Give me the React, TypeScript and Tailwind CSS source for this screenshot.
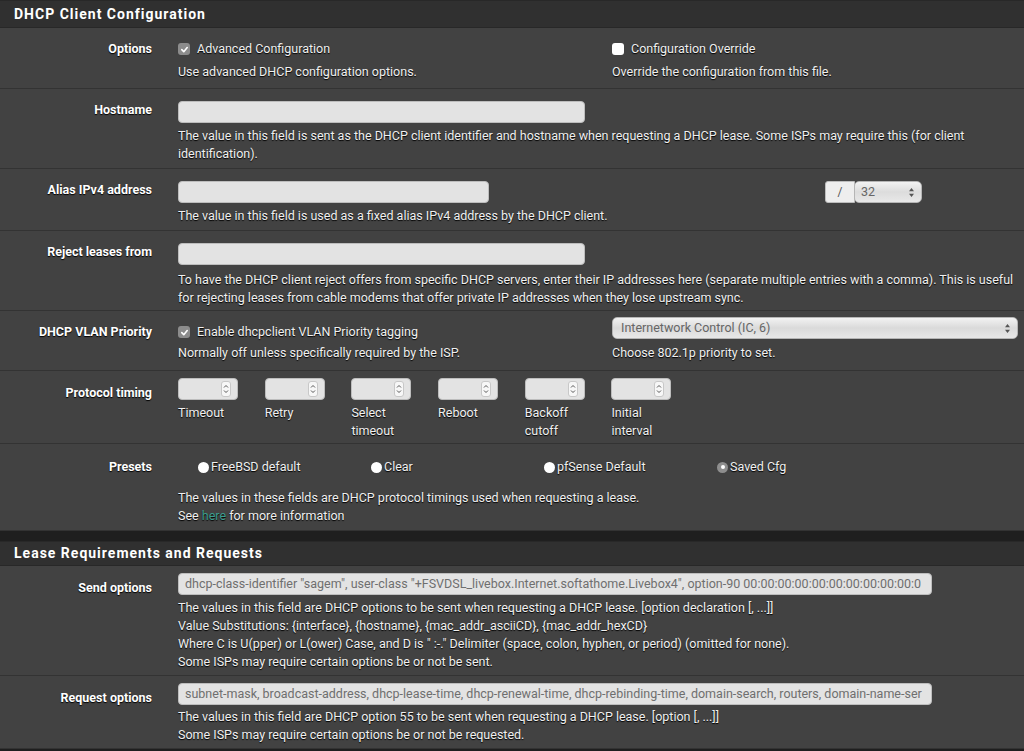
import React from "react";

const font = { fontFamily: "Roboto, 'Liberation Sans', sans-serif" };

const Check = ({ on }: { on: boolean }) =>
  on ? (
    <span className="inline-flex w-[12px] h-[12px] rounded-[3px] bg-[#8c8c8c] items-center justify-center">
      <svg width="9" height="9" viewBox="0 0 10 10">
        <path d="M2 5.2 L4.2 7.4 L8 2.8" stroke="#fff" strokeWidth="1.8" fill="none" strokeLinecap="round" strokeLinejoin="round" />
      </svg>
    </span>
  ) : (
    <span className="inline-block w-[12px] h-[12px] rounded-[3px] bg-white" />
  );

const Radio = ({ on, label }: { on?: boolean; label: string }) => (
  <div className="flex items-center gap-[2px]">
    {on ? (
      <span className="inline-flex w-[11px] h-[11px] rounded-full bg-[#8e8e8e] items-center justify-center">
        <span className="w-[4px] h-[4px] rounded-full bg-white" />
      </span>
    ) : (
      <span className="inline-block w-[11px] h-[11px] rounded-full bg-white" />
    )}
    <span>{label}</span>
  </div>
);

const Row = ({ label, labelTop, children }: { label: string; labelTop: string; children: React.ReactNode }) => (
  <div className="flex border-b border-[#333333]">
    <div className={"w-[152px] shrink-0 text-right font-bold text-white text-[12.5px] leading-[18px] [text-shadow:0_1px_1px_#000] " + labelTop}>
      {label}
    </div>
    <div className="ml-[26px] flex-1 pr-[6px]">{children}</div>
  </div>
);

const TextBox = ({ w, value }: { w: string; value?: string }) => (
  <div className={"h-[22px] rounded-[4px] bg-[#e3e3e3] border border-[#bdbdbd] px-[6px] text-[12.5px] leading-[20px] text-[#6f6f6f] whitespace-nowrap overflow-hidden " + w}>
    {value}
  </div>
);

const Spin = () => (
  <div className="w-[60px] h-[22px] rounded-[4px] bg-[#e3e3e3] border border-[#bdbdbd] flex items-center justify-end pr-[6px]">
    <span className="w-[10px] h-[16px] rounded-[3px] bg-[#f7f7f7] border border-[#c8c8c8] flex flex-col items-center justify-center">
      <svg width="6" height="12" viewBox="0 0 6 12">
        <path d="M1 4.5 L3 2.5 L5 4.5 M1 7.5 L3 9.5 L5 7.5" stroke="#444" strokeWidth="0.9" fill="none" />
      </svg>
    </span>
  </div>
);

const Arrows = () => (
  <svg width="7" height="11" viewBox="0 0 7 11">
    <path d="M3.5 1 L6 4.3 L1 4.3 Z M3.5 10 L6 6.7 L1 6.7 Z" fill="#555" />
  </svg>
);

const Desc = ({ children, className }: { children: React.ReactNode; className?: string }) => (
  <div className={"text-[12.5px] leading-[18px] text-[#f0f0f0] [text-shadow:0_1px_1px_#000] " + (className || "")}>{children}</div>
);

const Header = ({ title, h }: { title: string; h: string }) => (
  <div className={"bg-[#303030] border-t border-[#262626] border-b border-[#282828] flex items-center pl-[14px] " + h}>
    <span className="text-[14px] font-bold tracking-[1px] text-white">{title}</span>
  </div>
);

export default function App() {
  const timings = [["Timeout"], ["Retry"], ["Select", "timeout"], ["Reboot"], ["Backoff", "cutoff"], ["Initial", "interval"]];
  return (
    <div style={font} className="w-[1024px] h-[751px] bg-[#1f1f1f] overflow-hidden text-white">
      <Header title="DHCP Client Configuration" h="h-[28px] pt-[1px]" />
      <div className="bg-[#424242]">
        <Row label="Options" labelTop="pt-[12px]">
          <div className="flex pt-[12px] pb-[7px]">
            <div className="w-[434px]">
              <div className="flex items-center gap-[7px] h-[18px]">
                <Check on />
                <Desc>Advanced Configuration</Desc>
              </div>
              <Desc className="mt-[5px]">Use advanced DHCP configuration options.</Desc>
            </div>
            <div>
              <div className="flex items-center gap-[7px] h-[18px]">
                <Check on={false} />
                <Desc>Configuration Override</Desc>
              </div>
              <Desc className="mt-[5px]">Override the configuration from this file.</Desc>
            </div>
          </div>
        </Row>
        <Row label="Hostname" labelTop="pt-[12px]">
          <div className="pt-[12px] pb-[5px]">
            <TextBox w="w-[407px]" />
            <Desc className="mt-[4px]">
              The value in this field is sent as the DHCP client identifier and hostname when requesting a DHCP lease. Some ISPs may require this (for client identification).
            </Desc>
          </div>
        </Row>
        <Row label="Alias IPv4 address" labelTop="pt-[12px]">
          <div className="pt-[12px] pb-[5px]">
            <div className="flex">
              <TextBox w="w-[311px]" />
              <div className="ml-[336px] flex h-[22px]">
                <div className="w-[30px] bg-[#eeeeee] border border-[#bdbdbd] rounded-l-[3px] flex items-center justify-center text-[12px] text-[#555]">/</div>
                <div className="w-[68px] rounded-[5px] -ml-[1px] bg-gradient-to-b from-[#f2f2f2] via-[#dcdcdc] to-[#e8e8e8] border border-[#b5b5b5] flex items-center justify-between pl-[6px] pr-[6px] text-[12.5px] text-[#666]">
                  <span>32</span>
                  <Arrows />
                </div>
              </div>
            </div>
            <Desc className="mt-[4px]">The value in this field is used as a fixed alias IPv4 address by the DHCP client.</Desc>
          </div>
        </Row>
        <Row label="Reject leases from" labelTop="pt-[12px]">
          <div className="pt-[12px] pb-[3px]">
            <TextBox w="w-[407px]" />
            <Desc className="mt-[6px]">
              To have the DHCP client reject offers from specific DHCP servers, enter their IP addresses here (separate multiple entries with a comma). This is useful for rejecting leases from cable modems that offer private IP addresses when they lose upstream sync.
            </Desc>
          </div>
        </Row>
        <Row label="DHCP VLAN Priority" labelTop="pt-[12px]">
          <div className="flex pb-[8px]">
            <div className="w-[434px] pt-[12px]">
              <div className="flex items-center gap-[7px] h-[18px]">
                <Check on />
                <Desc>Enable dhcpclient VLAN Priority tagging</Desc>
              </div>
              <Desc className="mt-[3px]">Normally off unless specifically required by the ISP.</Desc>
            </div>
            <div className="pt-[6px] flex-1">
              <div className="w-[406px] h-[22px] rounded-[5px] bg-gradient-to-b from-[#f2f2f2] via-[#dadada] to-[#e8e8e8] border border-[#b5b5b5] flex items-center justify-between pl-[8px] pr-[6px] text-[12.5px] text-[#666]">
                <span>Internetwork Control (IC, 6)</span>
                <Arrows />
              </div>
              <Desc className="mt-[5px]">Choose 802.1p priority to set.</Desc>
            </div>
          </div>
        </Row>
        <Row label="Protocol timing" labelTop="pt-[13px]">
          <div className="flex pt-[7px] pb-[3px]">
            {timings.map((t) => (
              <div key={t[0]} className="w-[86.7px] shrink-0">
                <Spin />
                <Desc className="mt-[4px]">
                  {t.map((l) => (
                    <div key={l}>{l}</div>
                  ))}
                </Desc>
              </div>
            ))}
          </div>
        </Row>
        <Row label="Presets" labelTop="pt-[14px]">
          <div className="pt-[14px] pb-[5px]">
            <Desc className="flex pl-[20px] h-[18px]">
              <div className="w-[173px]"><Radio label="FreeBSD default" /></div>
              <div className="w-[173px]"><Radio label="Clear" /></div>
              <div className="w-[173px]"><Radio label="pfSense Default" /></div>
              <div className="w-[173px]"><Radio on label="Saved Cfg" /></div>
            </Desc>
            <Desc className="mt-[13px]">
              <div>The values in these fields are DHCP protocol timings used when requesting a lease.</div>
              <div>
                See <span className="text-[#3e9e8f]">here</span> for more information
              </div>
            </Desc>
          </div>
        </Row>
      </div>
      <div className="h-[10px] bg-[#1f1f1f]" />
      <Header title="Lease Requirements and Requests" h="h-[25px]" />
      <div className="bg-[#424242]">
        <Row label="Send options" labelTop="pt-[13px]">
          <div className="pt-[7px] pb-[4px]">
            <TextBox
              w="w-[754px]"
              value={'dhcp-class-identifier "sagem", user-class "+FSVDSL_livebox.Internet.softathome.Livebox4", option-90 00:00:00:00:00:00:00:00:00:00:0'}
            />
            <Desc className="mt-[4px]">
              <div>The values in this field are DHCP options to be sent when requesting a DHCP lease. [option declaration [, ...]]</div>
              <div>Value Substitutions: {"{interface}, {hostname}, {mac_addr_asciiCD}, {mac_addr_hexCD}"}</div>
              <div>Where C is U(pper) or L(ower) Case, and D is " :-." Delimiter (space, colon, hyphen, or period) (omitted for none).</div>
              <div>Some ISPs may require certain options be or not be sent.</div>
            </Desc>
          </div>
        </Row>
        <Row label="Request options" labelTop="pt-[13px]">
          <div className="pt-[7px] pb-[4px]">
            <TextBox
              w="w-[754px]"
              value="subnet-mask, broadcast-address, dhcp-lease-time, dhcp-renewal-time, dhcp-rebinding-time, domain-search, routers, domain-name-ser"
            />
            <Desc className="mt-[3px]">
              <div>The values in this field are DHCP option 55 to be sent when requesting a DHCP lease. [option [, ...]]</div>
              <div>Some ISPs may require certain options be or not be requested.</div>
            </Desc>
          </div>
        </Row>
      </div>
    </div>
  );
}
